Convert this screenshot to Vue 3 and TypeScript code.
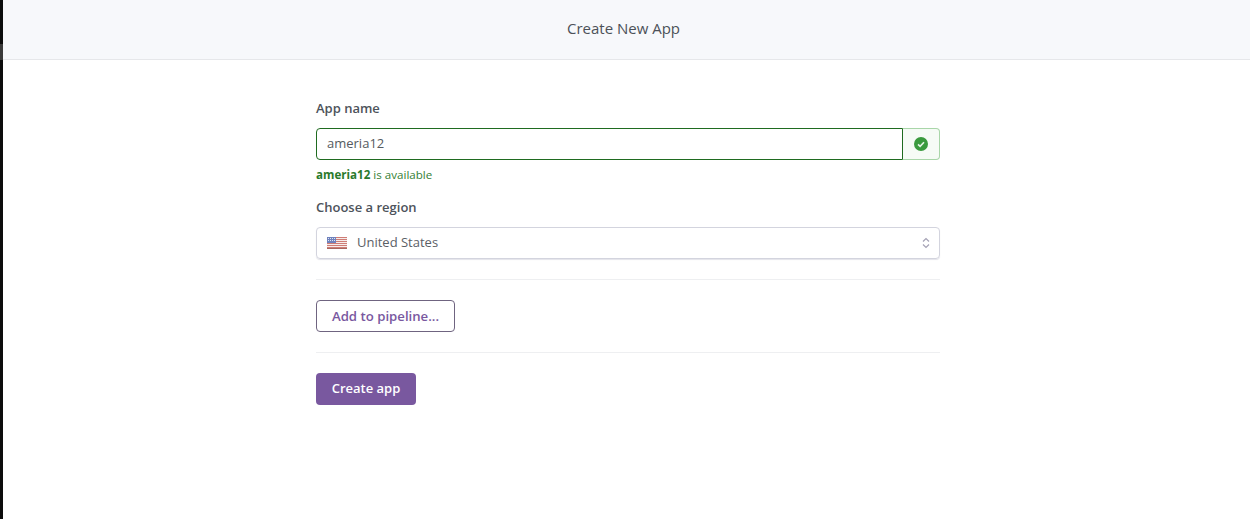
<script setup lang="ts">
const appName: string = 'ameria12'
const stripes: number[] = [0, 2, 4, 6, 8, 10]
</script>

<template>
  <div class="page">
    <div class="edge"></div>
    <main class="content">
      <header class="header">Create New App</header>
      <form class="form" @submit.prevent>
        <label class="label">App name</label>
        <div class="name-row">
          <input class="name-input" :value="appName" />
          <span class="status">
            <svg width="14" height="14" viewBox="0 0 14 14">
              <circle cx="7" cy="7" r="7" fill="#3a9a3e" />
              <path d="M4 7.3l2.1 2L10 5.2" fill="none" stroke="#e6f5e6" stroke-width="1.6" />
            </svg>
          </span>
        </div>
        <p class="hint"><b>{{ appName }}</b> is available</p>
        <label class="label region-label">Choose a region</label>
        <div class="select">
          <svg class="flag" width="20" height="12" viewBox="0 0 20 12" shape-rendering="crispEdges">
            <rect width="20" height="12" fill="#f6ecea" />
            <rect v-for="y in stripes" :key="y" x="0" :y="y" width="20" height="1" fill="#cf7d76" />
            <rect y="11" width="20" height="1" fill="#a8675f" />
            <rect width="9" height="6" fill="#6f82bd" />
            <path d="M1 1.5h7M1 3.5h7" stroke="#dfe4f2" stroke-width="1" stroke-dasharray="1 1" />
          </svg>
          <span class="select-text">United States</span>
          <svg class="chevrons" width="8" height="12" viewBox="0 0 8 12">
            <path d="M1 4.5L4 1.5l3 3M1 7.5l3 3 3-3" fill="none" stroke="#a5a2b5" stroke-width="1.2" />
          </svg>
        </div>
        <hr class="rule first-rule" />
        <button class="btn outline" type="button">Add to pipeline...</button>
        <hr class="rule second-rule" />
        <button class="btn solid" type="submit">Create app</button>
      </form>
    </main>
  </div>
</template>

<style>
html, body { margin: 0; background: #fff; overflow: hidden; }
</style>

<style scoped>
.page {
  display: flex;
  height: 519px;
  font-family: "Open Sans", "Noto Sans", sans-serif;
  color: #3f4650;
}
.edge {
  width: 3px;
  flex: none;
  background: linear-gradient(#0c0c0c 0 44px, #3a3a3a 44px 60px, #0c0c0c 60px);
}
.content { flex: 1; min-width: 0; }
.header {
  height: 59px;
  box-sizing: content-box;
  border-bottom: 1px solid #e6e7ea;
  background: #f7f8fb;
  text-align: center;
  font-size: 15px;
  line-height: 57px;
  color: #4c5158;
  padding-right: 6px;
}
.form {
  width: 624px;
  margin-left: 313px;
  padding-top: 39px;
  display: flex;
  flex-direction: column;
  align-items: flex-start;
}
.label {
  font-size: 13px;
  font-weight: 600;
  line-height: 18px;
  color: #4d535b;
}
.name-row {
  display: flex;
  width: 100%;
  height: 32px;
  margin-top: 11px;
}
.name-input {
  flex: 1;
  min-width: 0;
  box-sizing: border-box;
  height: 32px;
  padding: 0 10px 2px;
  border: 1px solid #1f6b20;
  border-radius: 4px 0 0 4px;
  outline: none;
  font: inherit;
  font-size: 13px;
  color: #555a60;
  background: #fff;
}
.status {
  width: 37px;
  box-sizing: border-box;
  display: flex;
  align-items: center;
  justify-content: center;
  border: 1px solid #a9d6a9;
  border-left: none;
  border-radius: 0 4px 4px 0;
  background: #f6fbf6;
}
.hint {
  margin: 7px 0 0;
  font-size: 11.6px;
  line-height: 16px;
  color: #357f36;
}
.hint b { color: #2a7a2c; font-weight: 700; }
.region-label { margin-top: 15px; }
.select {
  display: flex;
  align-items: center;
  width: 100%;
  height: 32px;
  margin-top: 11px;
  padding: 0 9px 0 10px;
  box-sizing: border-box;
  border: 1px solid #d3d4de;
  border-radius: 4px;
  box-shadow: 0 1px 1px #e4e4ea;
}
.select-text {
  flex: 1;
  margin-left: 10px;
  padding-bottom: 2px;
  font-size: 13px;
  color: #5b6066;
}
.rule {
  align-self: stretch;
  height: 1px;
  margin: 0;
  border: none;
  background: #eeeff1;
}
.first-rule { margin-top: 20px; margin-bottom: 20px; }
.second-rule { margin-top: 20px; margin-bottom: 20px; }
.btn {
  height: 32px;
  box-sizing: border-box;
  border-radius: 4px;
  font: inherit;
  font-size: 13px;
  font-weight: 600;
  padding: 0;
}
.outline {
  width: 139px;
  border: 1px solid #6f6480;
  background: #fff;
  color: #79589f;
  font-size: 13.2px;
}
.solid {
  width: 100px;
  border: none;
  background: #79589f;
  color: #fff;
  padding-bottom: 2px;
}
</style>
